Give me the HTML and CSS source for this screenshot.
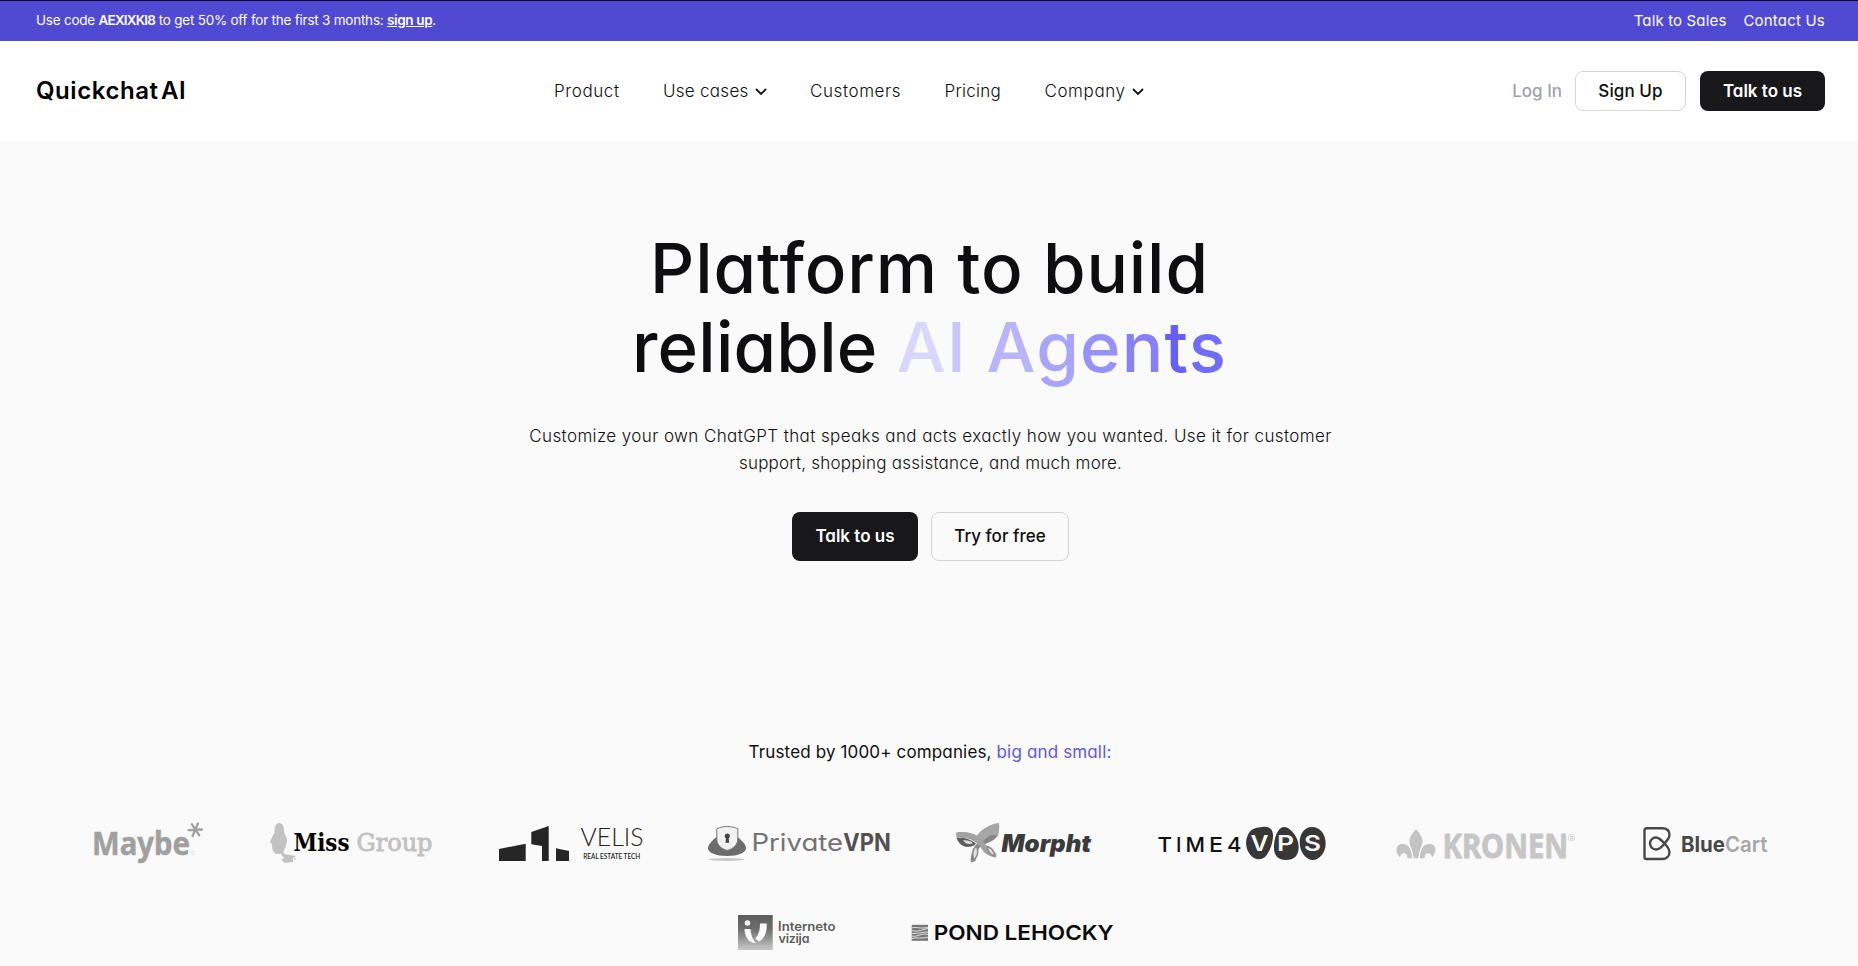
FILE: index.html
```html
<!DOCTYPE html>
<html lang="en">
<head>
<meta charset="utf-8">
<title>Quickchat AI</title>
<link rel="stylesheet" href="styles.css">
</head>
<body>
<div class="promo">
  <p class="promo-text">Use code <b>AEXIXKI8</b> to get 50% off for the first 3 months: <a class="promo-link">sign up</a>.</p>
  <div class="promo-links"><a class="promo-sales">Talk to Sales</a><a class="promo-contact">Contact Us</a></div>
</div>
<header class="header">
  <a class="brand">Quickchat AI</a>
  <nav class="nav">
    <a class="nav-item wide">Product</a>
    <a class="nav-item">Use cases<svg class="chevron" viewBox="0 0 12 8"><path d="M1.500 1.500 6 6l4.500-4.500"/></svg></a>
    <a class="nav-item wide">Customers</a>
    <a class="nav-item">Pricing</a>
    <a class="nav-item wide">Company<svg class="chevron" viewBox="0 0 12 8"><path d="M1.500 1.500 6 6l4.500-4.500"/></svg></a>
  </nav>
  <div class="actions">
    <a class="login">Log In</a>
    <a class="btn btn-light signup">Sign Up</a>
    <a class="btn btn-dark talk">Talk to us</a>
  </div>
</header>
<main class="hero">
  <h1 class="title">Platform to build<br><span class="tight">reliable</span> <span class="loose"><span class="c1">A</span><span class="c2">I</span> <span class="c3">A</span><span class="c4">g</span><span class="c5">e</span><span class="c6">n</span><span class="c7">t</span><span class="c8">s</span></span></h1>
  <p class="lead">Customize your own ChatGPT that speaks and acts exactly how you wanted. Use it for customer<br><span class="lead-end">support, shopping assistance, and much more.</span></p>
  <div class="cta">
    <a class="btn btn-dark btn-lg">Talk to us</a>
    <a class="btn btn-light btn-lg try">Try for free</a>
  </div>
</main>
<section class="trusted">
  <h2 class="trusted-title">Trusted by 1000+ companies, <span class="accent">big and small:</span></h2>
  <div class="logos">
    <svg class="logo" width="110" height="48" viewBox="0 0 110 48">
      <text x="-2" y="36" class="noto" font-size="33" font-weight="700" fill="#a0a0a0" stroke="#a0a0a0" stroke-width=".5" textLength="98" lengthAdjust="spacingAndGlyphs">Maybe</text>
      <path d="M104 4.500 98.500 17M94.500 11.200l13.500-.7M97.800 5.200l7.400 11" stroke="#a0a0a0" stroke-width="2.300" stroke-linecap="round"/>
      <circle cx="99" cy="34" r="1.500" fill="none" stroke="#ddd" stroke-width=".8"/>
    </svg>
    <svg class="logo" width="163" height="48" viewBox="0 0 163 48">
      <path d="M9 4c3.500 0 5 3.500 5 7.500 0 2.500 1 4 2.500 6.500 1.500 4-.5 10-2.500 13-1 1.800-.5 3 1 4.200l11 1.800-3.500 2.500 1 3.500-9 1-3-3.500 2.500-1.500-3.500-4.500C6 36 3 34.500 2.500 30L1.500 24.500 0 22.500l2-4c.5-2 2.500-3.500 2.500-6C4.500 8 6 4 9 4z" fill="#c2c2c2"/>
      <circle cx="25" cy="40" r="1" fill="#ccc"/>
      <text x="23.500" y="32" class="slab" font-size="25" font-weight="700" fill="#000" textLength="56" lengthAdjust="spacingAndGlyphs">Miss</text>
      <text x="86.500" y="32" class="slab" font-size="25" fill="#c2c2c2" stroke="#c2c2c2" stroke-width=".9" textLength="76" lengthAdjust="spacingAndGlyphs">Group</text>
    </svg>
    <svg class="logo" width="143" height="48" viewBox="0 0 143 48">
      <path d="M0 30l26.700-5.300V42H0zM32.300 13 49.700 7v35H43V27l-10.700-1.700zM57 29.300 70 32v10H57z" fill="#262626"/>
      <text x="81.500" y="26.700" class="lato" font-size="25.500" font-weight="300" fill="#222" textLength="63" lengthAdjust="spacingAndGlyphs">VELIS</text>
      <text x="84.200" y="40" class="lato" font-size="6.600" font-weight="600" fill="#222" textLength="57" lengthAdjust="spacingAndGlyphs">REAL ESTATE TECH</text>
    </svg>
    <svg class="logo" width="182" height="48" viewBox="0 0 182 48">
      <ellipse cx="18.500" cy="40.500" rx="18" ry="1.500" fill="#c9c9c9"/>
      <path d="M0 29.500C0 26 3 23 6 20l4-3h18l4 3c3 3 6 6 6 9.500 0 4-8 7.500-19 7.500S0 33.500 0 29.500z" fill="#6c6c6c"/>
      <path d="M19.300 7.500c4.500 0 7.500 1 10.500 2.200V20c0 5.500-4 9.500-10.500 11.500C12.500 29.500 8.800 25.500 8.800 20V9.700C11.800 8.500 14.800 7.500 19.300 7.500z" fill="#f1f1f1" stroke="#777" stroke-width="1"/>
      <path d="M19.300 14.500a2.600 2.600 0 0 1 1.400 4.800l.4 4.500h-3.600l.4-4.500a2.600 2.600 0 0 1 1.400-4.800z" fill="#444"/>
      <text x="43.500" y="32" font-size="24" fill="#737373" textLength="91.500" lengthAdjust="spacingAndGlyphs">Private</text>
      <text x="135.200" y="32" font-size="24" font-weight="700" fill="#515151" textLength="47.500" lengthAdjust="spacingAndGlyphs">VPN</text>
    </svg>
    <svg class="logo" width="136" height="48" viewBox="0 0 136 48">
      <path d="M15 43.500c-1-7 2-15 7-20C27 18 32 15 38 12l4.500 3C40 21 34 23 29 25c-7 3-10 9-9.500 17z" fill="#858585"/>
      <path d="M43 4c.5 5 .3 9-1.500 14-2-3-6-3-9-.5-4 3-7 6-9.500 9.500L18.500 21C23 11 33 5 43 4z" fill="#a6a6a6"/>
      <path d="M.5 19C3 26 8 29 15 27.500c2.500-.5 4-1.500 5-3C14 19.500 7 18 .5 19z" fill="#606060"/>
      <path d="M7 21.500c4-.5 7 .5 10 2.700-3.500 1.600-7 1-10-2.700z" fill="#dedede"/>
      <path d="M0 13.500c10-1.500 21 .5 27 8.500 3.500 5 7 9.500 13.500 12.500L40 38.500c-8-1-12-4.500-15-9.500-5-7-12-11-24.500-10z" fill="#a2a2a2"/>
      <path d="M18 41c-2.500-6-1.500-10.500 2-14 3 4 2.500 9.500-2 14zM38.500 37c-4.500-1.500-7-5-7-9.500 4 1.500 7 5 7 9.500z" fill="#dedede" stroke="#8a8a8a" stroke-width="1.400"/>
      <text x="45.500" y="33" font-size="24" font-weight="900" font-style="italic" fill="#3b3b3b" textLength="89.500" lengthAdjust="spacingAndGlyphs">Morpht</text>
    </svg>
    <svg class="logo" width="172" height="48" viewBox="0 0 172 48">
      <g class="geo" font-size="20" font-weight="500" fill="#111">
        <text x="-.5" y="32.500" textLength="14.500" lengthAdjust="spacingAndGlyphs">T</text><text x="18" y="32.500">I</text><text x="27.500" y="32.500" textLength="19.500" lengthAdjust="spacingAndGlyphs">M</text><text x="51" y="32.500" textLength="14" lengthAdjust="spacingAndGlyphs">E</text><text x="69" y="32.500" textLength="14.500" lengthAdjust="spacingAndGlyphs">4</text>
      </g>
      <path d="M104 8c8-1.500 11.500 3 11 9.500-.5 8-3.500 15-7 19.500-5 5-12 4-16-1.500C86.500 28 87 19 92 12.500 95 9 99 8.500 104 8zM127 8c6 1 13.500 10 13.700 20 0 9-5 13-12.700 13-7.500 0-12-4-12-12 0-9 3.500-22 11-21zM154 8c8 0 13.700 7 13.700 16.500S161 41 155 41c-7 0-13.300-8-13.300-17.500S147 8 154 8z" fill="#373737"/>
      <g font-size="21" font-weight="600" fill="#fafafa"><text x="92.500" y="32" textLength="18" lengthAdjust="spacingAndGlyphs">V</text><text x="119" y="32" textLength="17" lengthAdjust="spacingAndGlyphs">P</text><text x="146" y="32" textLength="17" lengthAdjust="spacingAndGlyphs">S</text></g>
    </svg>
    <svg class="logo" width="181" height="48" viewBox="0 0 181 48">
      <path d="M20 10c3.500 4 6.500 8 6.500 12.500 0 5-3.500 7-4 16.800h-5c-.5-9.800-4-11.800-4-16.800C13.500 18 16.500 14 20 10zM16 39.300h-4.800c.3-3-.7-5-3.200-5-2.300 0-3.500 1.500-4 4C-1.500 33-.5 25 6.500 25c6.500 0 9.500 6 9.500 14.300zM24 39.300h4.800c-.3-3 .7-5 3.200-5 2.300 0 3.500 1.500 4 4 5.500-5.300 4.500-13.300-2.500-13.300-6.500 0-9.500 6-9.500 14.300z" fill="#c4c4c4"/>
      <text x="46.500" y="38.500" class="noto" font-size="34" font-weight="700" fill="#c6c6c6" stroke="#c6c6c6" stroke-width=".9" textLength="125.500" lengthAdjust="spacingAndGlyphs">KRONEN</text>
      <circle cx="175.500" cy="18.700" r="3.200" fill="none" stroke="#ccc" stroke-width=".7"/>
      <text x="173.900" y="20.600" font-size="5" fill="#bbb">R</text>
    </svg>
    <svg class="logo" width="121" height="48" viewBox="0 0 121 48">
      <path d="M21.500 24.500C18 20.500 16 18.500 13 18.500a6 6 0 0 0 0 12c3 0 5.500-2 8.500-6 3-4 5-4.500 5-8.500 0-4.500-3-6.700-7.500-6.700H3.500a2 2 0 0 0-2 2V38a2 2 0 0 0 2 2H19c4.500 0 7.500-2.700 7.500-7 0-4-2-5-5-8.500z" fill="none" stroke="#484848" stroke-width="2.400"/>
      <text x="38" y="33" font-size="22" font-weight="700" fill="#484848" textLength="86.500" lengthAdjust="spacingAndGlyphs" class="plain">Blue<tspan font-weight="600" fill="#a8a8a8">Cart</tspan></text>
    </svg>
  </div>
  <div class="logos logos-second">
    <svg class="logo" width="98" height="48" viewBox="0 0 98 48">
      <defs><linearGradient id="fade" x2="0" y2="1"><stop stop-color="#5c5c5c"/><stop offset=".4" stop-color="#6e6e6e"/><stop offset="1" stop-color="#c8c8c8"/></linearGradient></defs>
      <path d="M0 6h34.700v35H0z" fill="url(#fade)"/>
      <circle cx="9.500" cy="14" r="2.800" fill="#fafafa"/>
      <path d="M6.500 20h6c.5 6 2 10.500 5.500 14.300-6 0-11.300-5-11.500-14.300zM22 14.500h6.800c.2 9-2 15-8 18l-3.500-3c3.500-4 4.700-8.500 4.700-15z" fill="#fafafa"/>
      <text x="40" y="22" font-size="12.500" font-weight="600" fill="#5c5c5c" textLength="57.500" lengthAdjust="spacingAndGlyphs">Interneto</text>
      <text x="40.500" y="34.300" font-size="12.500" font-weight="600" fill="#5c5c5c" textLength="31">vizija</text>
    </svg>
    <svg class="logo" width="209" height="48" viewBox="0 0 209 48">
      <path d="M.7 15.800H17v16H.7z" fill="#777"/>
      <path d="M.5 19c5-1.500 8 1 16.500-.5M.5 21.500c6 1.500 8 0 16.500-2M.5 24.500c7 0 9-1 16.500-1.500M.5 27c6 1.500 10-3.500 16.500-1.500M.5 29.700c5-2 10 .5 16.500-1.500" fill="none" stroke="#eee" stroke-width=".9"/>
      <text x="22.700" y="31" class="geo" font-size="20.500" font-weight="600" fill="#0b0b0b" textLength="180" lengthAdjust="spacingAndGlyphs">POND LEHOCKY</text>
    </svg>
  </div>
</section>
</body>
</html>
```
FILE: styles.css
```css
* { box-sizing: border-box; margin: 0; padding: 0; }
body {
  height: 966px;
  overflow: hidden;
  background: #fafafa;
  font-family: Inter, "Liberation Sans", sans-serif;
  font-feature-settings: "cv11";
  color: #0e0e10;
}

/* promo bar */
.promo {
  height: 41px;
  border-top: 1px solid #0b0838;
  background: #5049d2;
  color: #fff;
  display: flex;
  align-items: center;
  justify-content: space-between;
  padding: 0 33px 2px 36px;
}
.promo-text { font-size: 13.5px; letter-spacing: -.23px; }
.promo-text b { font-weight: 600; letter-spacing: -.8px; }
.promo-link { font-weight: 600; letter-spacing: -.35px; text-decoration: underline; }
.promo-links { display: flex; gap: 17px; font-size: 15px; }
.promo-sales { letter-spacing: .15px; }
.promo-contact { letter-spacing: .2px; }

/* header */
.header {
  height: 100px;
  background: #fff;
  display: flex;
  align-items: center;
  padding: 0 33px 0 36px;
}
.brand {
  width: 518px;
  padding-bottom: 2px;
  font-size: 24px;
  font-weight: 600;
  letter-spacing: .55px;
  word-spacing: -4px;
  color: #000;
  font-feature-settings: normal;
}
.nav { display: flex; gap: 43.3px; padding-bottom: 1px; font-size: 17px; font-weight: 300; }
.nav-item { display: flex; align-items: center; letter-spacing: .3px; }
.nav-item.wide { letter-spacing: .6px; }
.chevron {
  width: 12px;
  height: 8px;
  margin: 3px 0 0 6px;
  fill: none;
  stroke: #111;
  stroke-width: 1.8;
  stroke-linecap: round;
}
.actions { display: flex; align-items: center; margin-left: auto; font-size: 17px; font-weight: 500; }
.login { color: #a1a1aa; margin-right: 13px; }

.btn {
  display: flex;
  align-items: center;
  justify-content: center;
  height: 40px;
  padding-bottom: 1px;
  border-radius: 8px;
  font-size: 17px;
}
.btn-dark { background: #18181b; color: #fff; font-weight: 600; }
.btn-light { border: 1px solid #d4d4d8; font-weight: 500; }
.signup { width: 111px; margin-right: 14px; letter-spacing: .1px; }
.talk { width: 125px; }

/* hero */
.hero { padding-top: 88px; text-align: center; }
.title { padding-left: 1px; font-size: 69px; line-height: 79px; font-weight: 500; letter-spacing: .9px; }
.tight { letter-spacing: .2px; }
.loose { letter-spacing: 1.2px; }
.c1 { color: #dad6fc; }
.c2 { color: #cac6fa; }
.c3 { color: #b8b5fb; }
.c4 { color: #a9a5fb; }
.c5 { color: #9792fa; }
.c6 { color: #8681fa; }
.c7 { color: #675ffb; }
.c8 { color: #726cfb; }
.lead { margin-top: 36px; padding-left: 3px; font-size: 17px; line-height: 27px; font-weight: 300; letter-spacing: .4px; }
.lead-end { letter-spacing: .23px; }
.cta { display: flex; justify-content: center; gap: 13px; margin-top: 35px; padding-left: 3px; }
.btn-lg { width: 126px; height: 49px; }
.try { width: 138px; }

/* customers */
.trusted { margin-top: 179px; }
.trusted-title { padding-left: 2px; text-align: center; font-size: 17px; line-height: 24px; font-weight: 400; letter-spacing: .15px; }
.accent { color: #5f56e6; }
.logos { display: flex; justify-content: center; gap: 66px; margin-top: 55px; }
.logos-second { gap: 75px; margin-top: 42px; }
.logo { flex: none; overflow: visible; }
.noto { font-family: "Noto Sans", sans-serif; }
.slab { font-family: "DejaVu Serif", serif; }
.lato { font-family: Lato, sans-serif; }
.geo, .plain { font-feature-settings: normal; }
```
